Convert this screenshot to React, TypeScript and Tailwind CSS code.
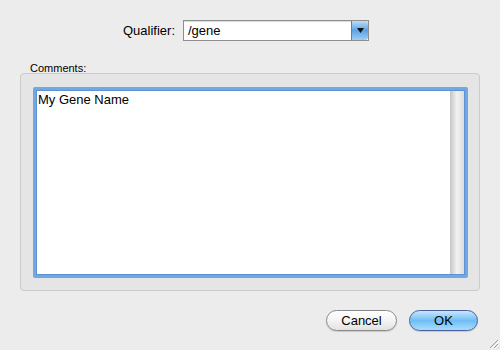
import React from "react";

const font = { fontFamily: '"Lucida Grande", "Liberation Sans", Arial, sans-serif' };

export default function App() {
  return (
    <div className="w-[500px] h-[350px] bg-[#ececec] relative flex flex-col text-black" style={font}>
      {/* Qualifier row */}
      <div className="flex items-center pt-[20px] pl-[123px] h-[41px]">
        <span className="text-[13px] leading-none w-[56px]">Qualifier:</span>
        <div className="ml-[4px] flex h-[21px] w-[186px] border border-[#8e8e8e] bg-white shadow-[inset_0_1px_1px_rgba(0,0,0,0.15)]">
          <span className="flex-1 text-[13px] leading-[19px] pl-[4px]">/gene</span>
          <div className="w-[17px] h-full rounded-r-[3px] bg-gradient-to-b from-[#bcdcf7] via-[#5ba2e4] to-[#9fcdf4] border-l border-[#5a7fb5] flex items-center justify-center">
            <svg width="7" height="5" viewBox="0 0 7 5">
              <path d="M0 0h7L3.5 5z" fill="#111" />
            </svg>
          </div>
        </div>
      </div>

      {/* Comments label */}
      <div className="pl-[30px] pt-[21px] text-[11px] leading-[12px]">Comments:</div>

      {/* Group box */}
      <div className="ml-[20px] mt-[-1px] w-[460px] h-[218px] rounded-[4px] border border-[#cbcbcb] bg-[#e5e5e5] pt-[13px] pl-[12px]">
        <div className="w-[435px] h-[191px] rounded-[2px] border-[3px] border-[#6ea8e6] flex">
          <div className="flex-1 bg-white border border-[#5f93cf] flex">
            <div className="flex-1 text-[13px] leading-[15px] pl-[1px] pt-[1px]">My Gene Name</div>
            <div className="w-[14px] bg-gradient-to-r from-[#c5c5c5] via-[#f2f2f2] to-[#dcdcdc]" />
          </div>
        </div>
      </div>

      {/* Buttons */}
      <div className="flex justify-end gap-[12px] pr-[22px] pt-[19px]">
        <button className="w-[71px] h-[21px] rounded-full border border-[#8a8a8a] bg-gradient-to-b from-white via-[#f4f4f4] to-[#e2e2e2] text-[13px] leading-none shadow-[0_1px_1px_rgba(0,0,0,0.15)]">
          Cancel
        </button>
        <button className="w-[69px] h-[21px] rounded-full border border-[#4a5fa0] bg-gradient-to-b from-[#c7e6fd] via-[#6fbdf5] to-[#a8dcfb] text-[13px] leading-none shadow-[0_1px_1px_rgba(0,0,0,0.15)]">
          OK
        </button>
      </div>

      {/* Resize grip */}
      <svg className="absolute right-[1px] bottom-[1px]" width="12" height="12" viewBox="0 0 12 12">
        <path d="M11 3L3 11M11 7L7 11M11 10.5L10.5 11" stroke="#9a9a9a" strokeWidth="1" />
        <path d="M12 4L4 12M12 8L8 12" stroke="#fff" strokeWidth="1" />
      </svg>
    </div>
  );
}
